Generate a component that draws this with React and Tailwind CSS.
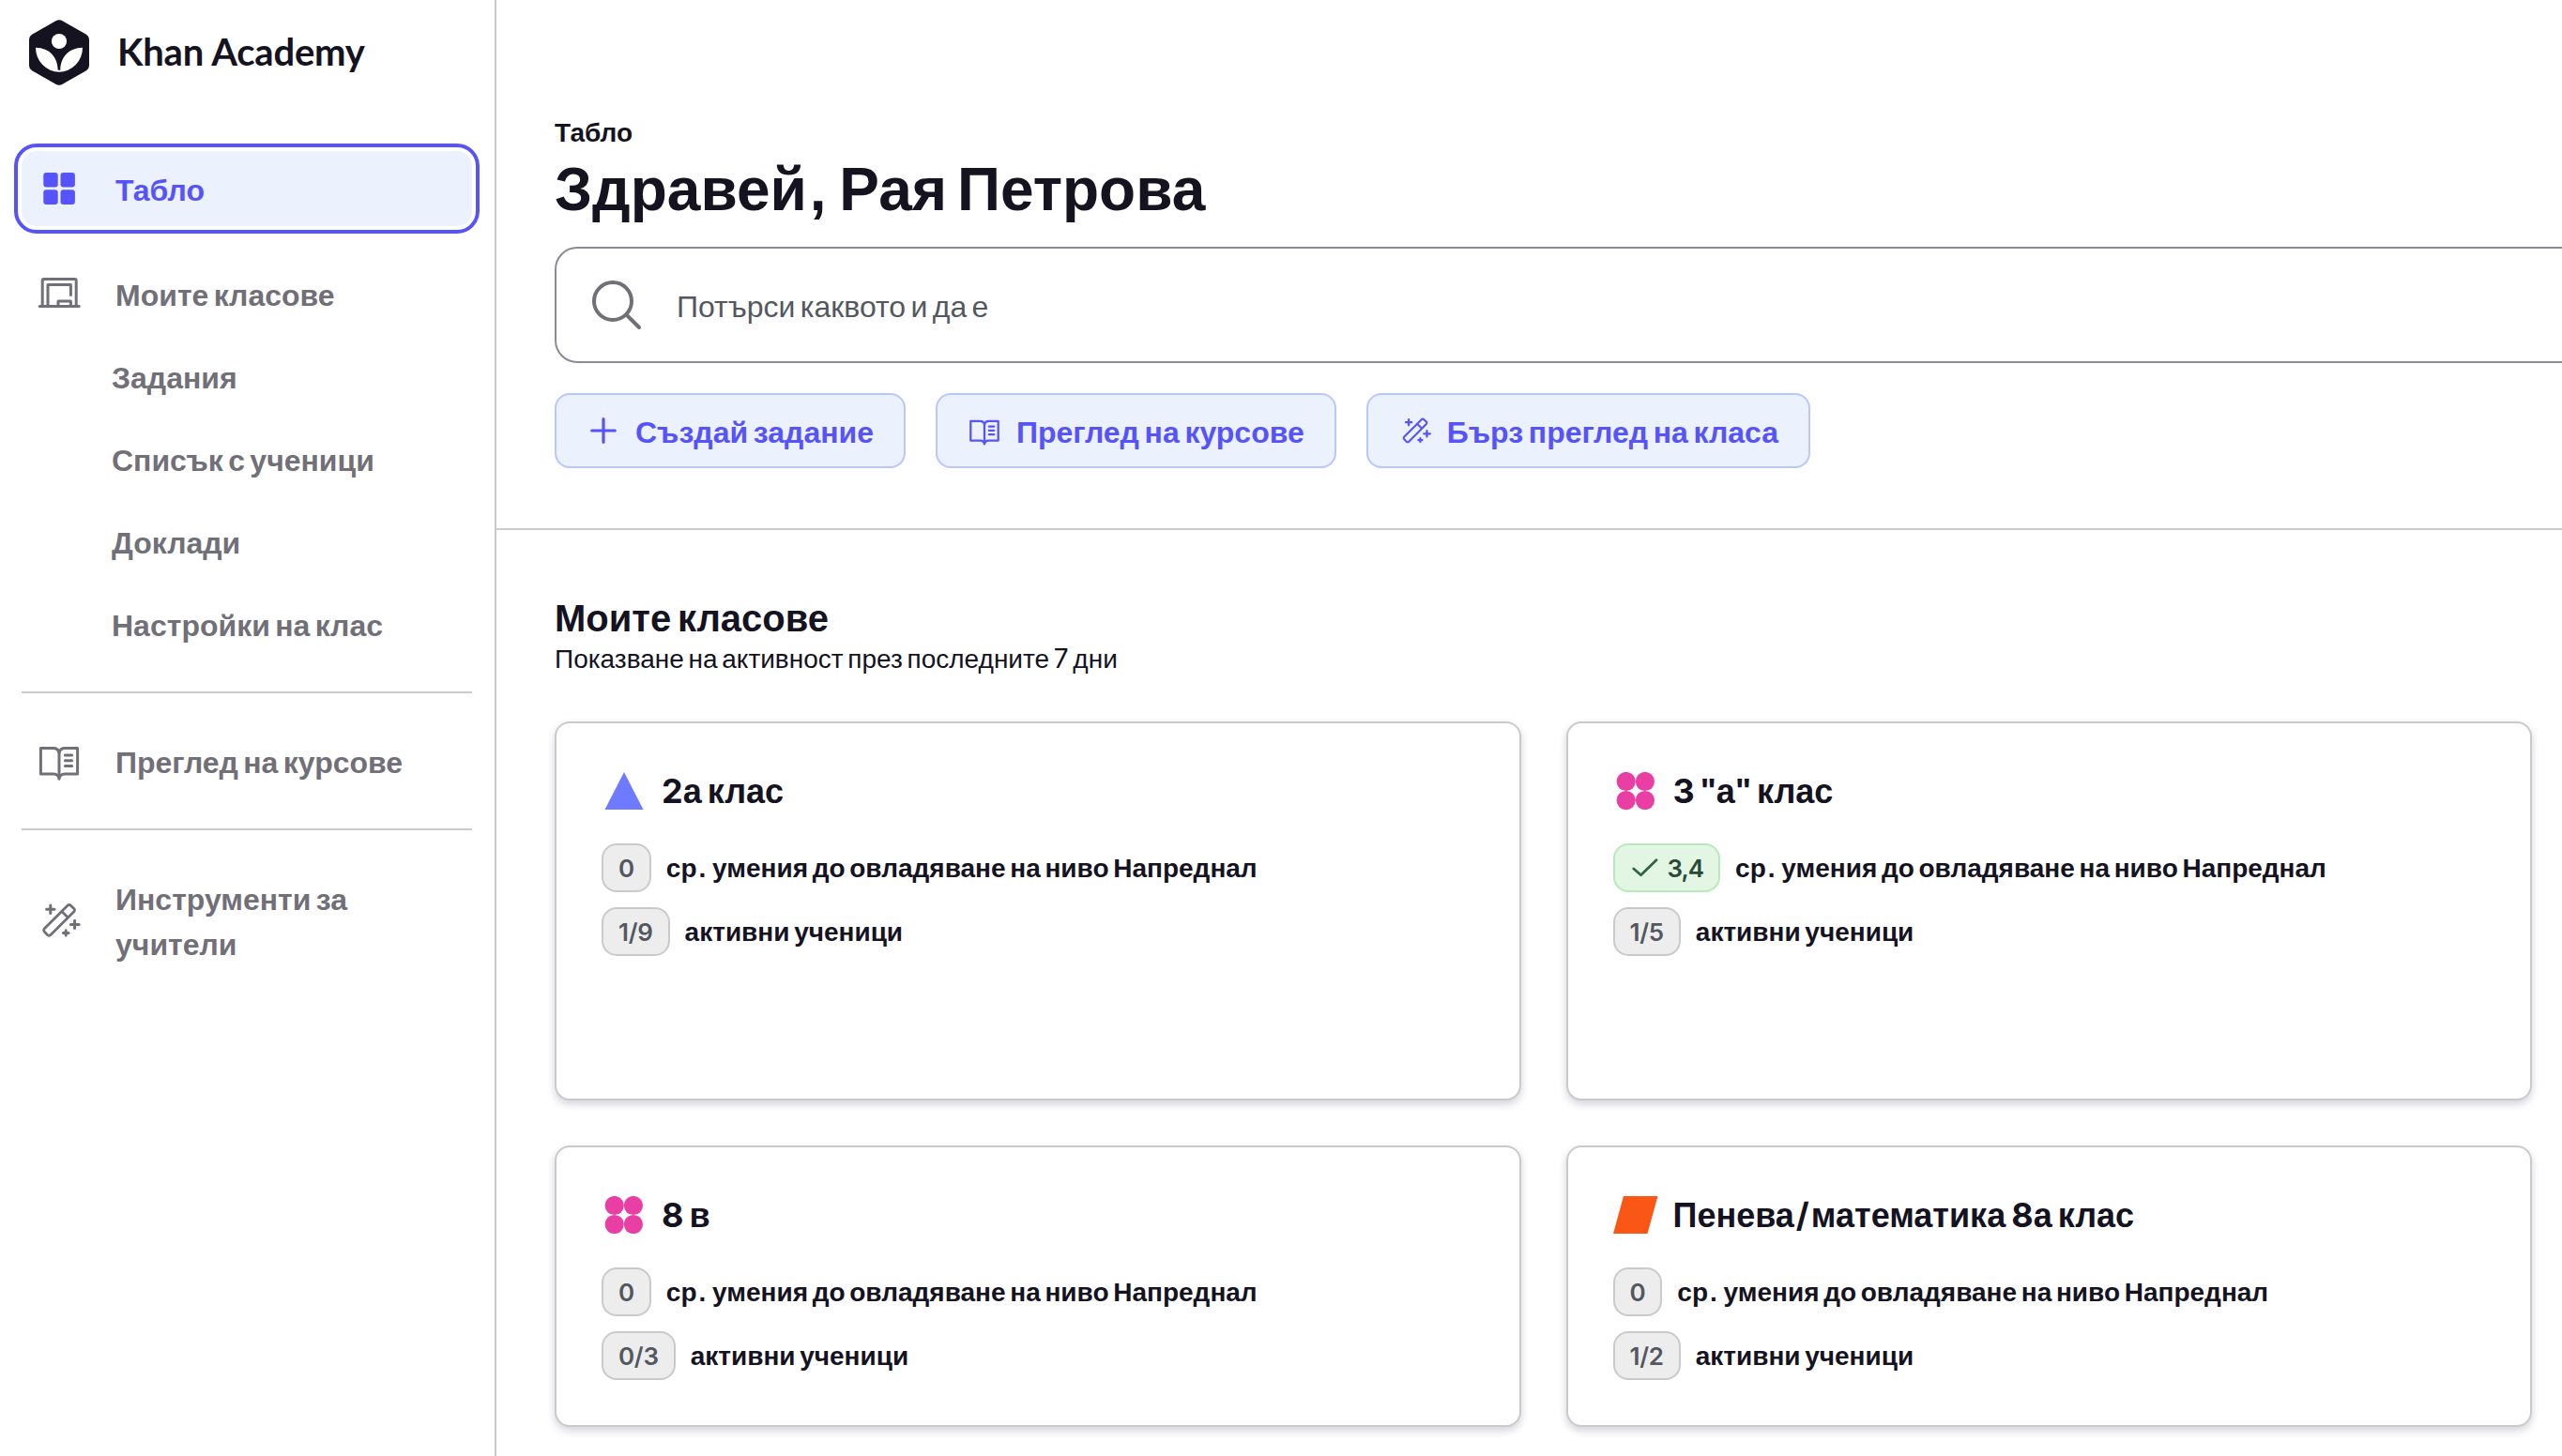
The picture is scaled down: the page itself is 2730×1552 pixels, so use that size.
import React from "react";

function Logo() {
  return (
    <svg className="h-[70px] w-16" viewBox="0 0 64 70" fill="none">
      <path
        d="M28.5 1.2a7 7 0 0 1 7 0l25 14.2a7 7 0 0 1 3.5 6.1v27a7 7 0 0 1-3.5 6.1l-25 14.2a7 7 0 0 1-7 0l-25-14.2A7 7 0 0 1 0 48.500v-27a7 7 0 0 1 3.500-6.100z"
        fill="#14131f"
      />
      <circle cx="32" cy="23" r="8.100" fill="#fff" />
      <path
        d="M7 29.700A25 26 0 0 0 57 29.700C42 30 33.500 40 33.300 53.800H30.700C30.500 40 22 30 7 29.700Z"
        fill="#fff"
      />
    </svg>
  );
}

function TilesIcon() {
  return (
    <svg className="size-12" viewBox="0 0 48 48" fill="currentColor">
      <rect x="7.300" y="6.900" width="15.400" height="15.700" rx="3" />
      <rect x="25.500" y="6.900" width="15.400" height="15.700" rx="3" />
      <rect x="7.300" y="25.200" width="15.400" height="15.700" rx="3" />
      <rect x="25.500" y="25.200" width="15.400" height="15.700" rx="3" />
    </svg>
  );
}

function BoardIcon() {
  return (
    <svg className="size-12" viewBox="0 0 24 24" fill="none" stroke="currentColor" strokeWidth="1.500" strokeLinecap="round" strokeLinejoin="round">
      <path d="M1.600 18.800H22.600M3.100 18.800V4.900c0-.4.3-.7.7-.7h16.600c.4 0 .7.300.7.700v13.900M6 18.800V7.300h12.200V12.800M11.500 18.800V16h6.700v2.800" />
    </svg>
  );
}

function BookIcon({ className }) {
  return (
    <svg className={className} viewBox="0 0 24 24" fill="none" stroke="currentColor" strokeWidth="1.500" strokeLinecap="round" strokeLinejoin="round">
      <path d="M12 7.600C11.700 6.200 10.400 5.200 8.800 5.200H2.200V19h6.800c1.700 0 2.800 1 3 2.600.2-1.600 1.300-2.600 3-2.600h6.800V5.200h-6.600C13.600 5.200 12.300 6.200 12 7.600Z" />
      <path d="M12 7.600v13" />
      <path d="M15.200 9h3.600M15.200 11.900h3.600M15.200 14.800h3.600" />
    </svg>
  );
}

function WandIcon({ className }) {
  return (
    <svg className={className} viewBox="0 0 24 24" fill="none" stroke="currentColor" strokeWidth="1.400" strokeLinecap="round" strokeLinejoin="round">
      <path d="M16.500 4.100 4.200 16.400a1.200 1.200 0 0 0 0 1.700l1.600 1.700a1.200 1.200 0 0 0 1.700 0L19.900 7.400a1.200 1.200 0 0 0 0-1.700l-1.700-1.600a1.200 1.200 0 0 0-1.700 0Z" />
      <path d="m13.400 7.200 3.200 3.200" />
      <path strokeWidth="1.500" d="M7.400 4v4.200M5.300 6.100h4.200M20.300 12.100v4.200M18.200 14.200h4.400M15.600 17.400v2.600M14.200 18.700h2.800" />
    </svg>
  );
}

function PlusIcon() {
  return (
    <svg className="size-9" viewBox="0 0 36 36" stroke="currentColor" strokeWidth="3.200" strokeLinecap="round">
      <path d="M18 5.700v24.600M5.700 18h24.600" />
    </svg>
  );
}

function SearchIcon() {
  return (
    <svg className="h-14 w-14" viewBox="0 0 56 56" fill="none" stroke="#717078" strokeWidth="4" strokeLinecap="round">
      <circle cx="24" cy="24" r="20" />
      <path d="M38.500 38.500 52 52" />
    </svg>
  );
}

function CheckIcon() {
  return (
    <svg className="mr-2.5 h-5 w-7" viewBox="0 0 28 20" fill="none" stroke="#2f6544" strokeWidth="2.800" strokeLinecap="round" strokeLinejoin="round">
      <path d="M1.800 11 9.500 17.800 26 1.800" />
    </svg>
  );
}

function Shape({ kind }) {
  if (kind === "triangle") {
    return (
      <svg className="h-10 w-12" viewBox="0 0 48 40">
        <path d="M24 0 44.500 40H3.500Z" fill="#6e7aff" />
      </svg>
    );
  }
  if (kind === "slant") {
    return (
      <svg className="h-10 w-12" viewBox="0 0 48 40">
        <path d="M11 0H47.500L36.500 40H0Z" fill="#fa5616" />
      </svg>
    );
  }
  return (
    <svg className="h-10 w-12" viewBox="0 0 48 40" fill="#e93fa5">
      <circle cx="13.700" cy="10" r="10.100" />
      <circle cx="33.900" cy="10" r="10.100" />
      <circle cx="13.700" cy="30" r="10.100" />
      <circle cx="33.900" cy="30" r="10.100" />
    </svg>
  );
}

function Badge({ good, children }) {
  return (
    <span
      className={
        good
          ? "flex h-[52px] items-center rounded-2xl border-2 border-[#b8e9b8] bg-[#e3f6e3] pl-[18px] pr-4 font-[Inter] text-[26px] font-semibold tracking-[-1px] text-[#2a4a38]"
          : "flex h-[52px] items-center rounded-2xl border-2 border-[#cacaca] bg-[#ededee] px-4 font-[Inter] text-[26px] font-semibold tracking-[-0.3px] text-[#535860]"
      }
    >
      {good && <CheckIcon />}
      {children}
    </span>
  );
}

// Digits and slashes come from the Latin face, the rest from the Cyrillic one
function Mixed({ text }) {
  return text.split(/([0-9]+|\/)/).map((part, i) =>
    i % 2 ? (
      <span key={i} className={part === "/" ? "px-0.5 font-[Inter] leading-none" : "font-[Inter] leading-none"}>
        {part}
      </span>
    ) : (
      part
    )
  );
}

function ClassCard({ shape, title, skills, good, active }) {
  return (
    <div className="rounded-2xl border-2 border-[#cacaca] bg-white px-12 pt-11 shadow-[0_4px_8px_rgba(33,36,80,0.2)]">
      <div className="flex h-[56px] items-center gap-4">
        <Shape kind={shape} />
        <h3 className="pt-0.5 text-[36px] font-bold leading-[44px] [word-spacing:-0.11em]">
          <Mixed text={title} />
        </h3>
      </div>
      <div className="mt-7 flex items-center gap-4">
        <Badge good={good}>{skills}</Badge>
        <span className="pt-0.5 text-[28px] font-bold [word-spacing:-0.11em]">
          ср<span className="px-0.5">.</span> умения до овладяване на ниво Напреднал
        </span>
      </div>
      <div className="mt-4 flex items-center gap-4">
        <Badge>{active}</Badge>
        <span className="pt-0.5 text-[28px] font-bold [word-spacing:-0.11em]">активни ученици</span>
      </div>
    </div>
  );
}

function Chip({ icon, children }) {
  return (
    <button className="flex h-20 items-center gap-4 rounded-2xl border-2 border-[#b9c6ff] bg-[#ebf1fd] px-8 text-[32px] font-bold text-[#5753fa] [word-spacing:-0.1em]">
      {icon}
      <span className="pt-[3px]">{children}</span>
    </button>
  );
}

const subItems = ["Задания", "Списък с ученици", "Доклади", "Настройки на клас"];

const classes = [
  { shape: "triangle", title: "2а клас", skills: "0", active: "1/9" },
  { shape: "dots", title: '3 "а" клас', skills: "3,4", good: true, active: "1/5" },
  { shape: "dots", title: "8 в", skills: "0", active: "0/3" },
  { shape: "slant", title: "Пенева/математика 8а клас", skills: "0", active: "1/2" },
];

export default function App() {
  return (
    <div className="flex h-[1552px] w-[2730px] overflow-hidden bg-white font-['Liberation_Sans',sans-serif] text-[#14131f]">
      <aside className="w-[529px] shrink-0 border-r-2 border-[#cacaca] text-[32px] font-bold leading-[48px] text-[#717078] [word-spacing:-0.11em]">
        <div className="flex h-[153px] items-start gap-[30px] pl-[31px] pt-[21px]">
          <Logo />
          <span className="pt-[10px] font-[Lato] text-[40px] tracking-[-0.2px] text-[#14131f] [word-spacing:0px]">Khan Academy</span>
        </div>

        <nav className="pl-[23px] pr-6">
          <a className="-mx-2 flex h-24 rounded-3xl border-4 border-[#5753fa] p-1 text-[#5753fa]">
            <span className="flex grow items-center gap-9 rounded-2xl bg-[#ebf1fd] pl-4">
              <TilesIcon />
              <span className="pt-[3px]">Табло</span>
            </span>
          </a>
          <a className="mt-6 flex h-20 items-center gap-9 pl-4">
            <BoardIcon />
            <span className="pt-[3px]">Моите класове</span>
          </a>
          {subItems.map((item) => (
            <a key={item} className="mt-2 flex h-20 items-center pl-24 pt-[3px]">
              {item}
            </a>
          ))}
          <hr className="mt-8 border-t-2 border-[#cacaca]" />
          <a className="mt-8 flex h-20 items-center gap-9 pl-4">
            <BookIcon className="size-12" />
            <span className="pt-[3px]">Преглед на курсове</span>
          </a>
          <hr className="mt-8 border-t-2 border-[#cacaca]" />
          <a className="mt-8 flex h-32 items-center gap-9 pl-4">
            <WandIcon className="size-12 shrink-0" />
            <span className="pt-[3px]">
              Инструменти за
              <br />
              учители
            </span>
          </a>
        </nav>
      </aside>

      <main className="min-w-0 grow">
        <section className="h-[565px] border-b-2 border-[#cacaca] pl-[62px] pt-[122px]">
          <p className="text-[28px] font-bold leading-10">Табло</p>
          <h1 className="mt-1 text-[64px] font-bold leading-[72px] [word-spacing:-0.11em]">
            Здравей<span className="px-[3px]">,</span> Рая Петрова
          </h1>
          <div className="mt-[25px] flex h-[124px] w-[2200px] items-center gap-9 rounded-3xl border-2 border-[#8b8b93] pl-9">
            <SearchIcon />
            <span className="pt-[3px] text-[32px] text-[#535860] [word-spacing:-0.11em]">Потърси каквото и да е</span>
          </div>
          <div className="mt-8 flex gap-8">
            <Chip icon={<PlusIcon />}>Създай задание</Chip>
            <Chip icon={<BookIcon className="size-9" />}>Преглед на курсове</Chip>
            <Chip icon={<WandIcon className="size-9" />}>Бърз преглед на класа</Chip>
          </div>
        </section>

        <section className="pl-[62px] pr-8 pt-[70px]">
          <h2 className="text-[40px] font-bold leading-[48px] [word-spacing:-0.11em]">Моите класове</h2>
          <p className="h-10 text-[28px] leading-10 [word-spacing:-0.11em]">
            <Mixed text="Показване на активност през последните 7 дни" />
          </p>
          <div className="mt-[46px] grid grid-cols-2 grid-rows-[404px_300px] gap-12">
            {classes.map((c) => (
              <ClassCard key={c.title} {...c} />
            ))}
          </div>
        </section>
      </main>
    </div>
  );
}
